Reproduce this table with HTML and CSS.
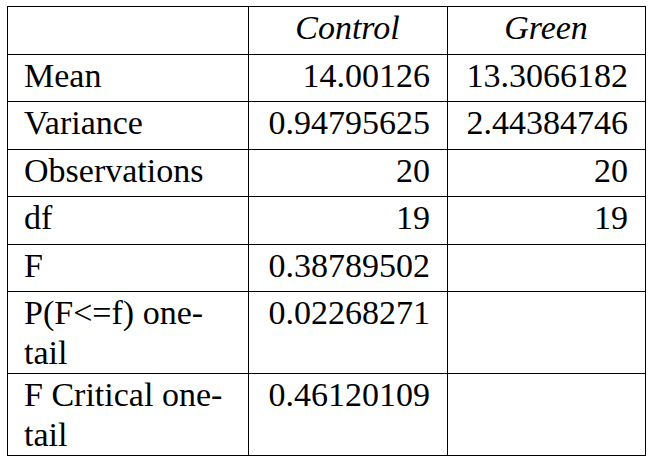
FILE: index.html
```html
<!DOCTYPE html>
<html>
<head>
<meta charset="utf-8">
<link rel="stylesheet" href="styles.css">
</head>
<body>
<table class="stats">
  <colgroup>
    <col class="c-label">
    <col class="c-control">
    <col class="c-green">
  </colgroup>
  <tr class="row">
    <td></td>
    <td class="head">Control</td>
    <td class="head">Green</td>
  </tr>
  <tr class="row">
    <td class="label">Mean</td>
    <td class="num">14.00126</td>
    <td class="num">13.3066182</td>
  </tr>
  <tr class="row">
    <td class="label">Variance</td>
    <td class="num">0.94795625</td>
    <td class="num">2.44384746</td>
  </tr>
  <tr class="row">
    <td class="label">Observations</td>
    <td class="num">20</td>
    <td class="num">20</td>
  </tr>
  <tr class="row">
    <td class="label">df</td>
    <td class="num">19</td>
    <td class="num">19</td>
  </tr>
  <tr class="row">
    <td class="label">F</td>
    <td class="num">0.38789502</td>
    <td></td>
  </tr>
  <tr class="row-tall">
    <td class="label">P(F&lt;=f) one-tail</td>
    <td class="num">0.02268271</td>
    <td></td>
  </tr>
  <tr class="row-tall">
    <td class="label">F Critical one-tail</td>
    <td class="num">0.46120109</td>
    <td></td>
  </tr>
</table>
</body>
</html>
```

FILE: styles.css
```css
html, body {
  margin: 0;
  padding: 0;
  background: #ffffff;
  font-family: "Liberation Serif", "DejaVu Serif", serif;
}

.stats {
  margin: 6px 0 0 7px;
  border-collapse: collapse;
  table-layout: fixed;
  width: 638px;
  color: #000000;
}

.c-label { width: 241px; }
.c-control { width: 199px; }
.c-green { width: 198px; }

.stats td {
  font-family: "Liberation Serif", "DejaVu Serif", serif;
  font-size: 34px;
  line-height: 40px;
  border: 1px solid #000000;
  padding: 1px 17px 0 16px;
  vertical-align: top;
}

.row { height: 47.5px; }
.row-tall { height: 80.5px; }

.head {
  font-style: italic;
  text-align: center;
}

.label { text-align: left; }
.num { text-align: right; }
```
